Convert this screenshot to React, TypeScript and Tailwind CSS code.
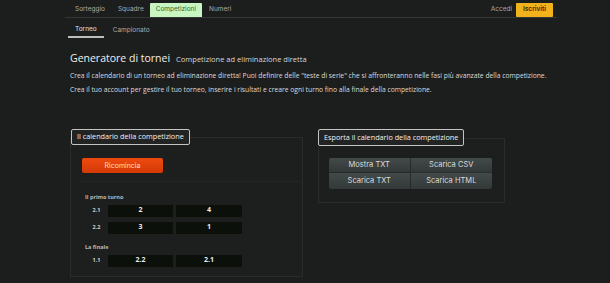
export default function App() {
  const nav = "font-['Inter',sans-serif]";
  const body = "font-['Open_Sans',sans-serif]";
  const cell = "h-[12px] flex items-center justify-center bg-[#0c100b] text-[7px] font-bold text-[#ececec]";
  const lbl = "w-[23px] text-center text-[5.5px] font-bold text-[#cfcfcf]";
  return (
    <div className={`w-[610px] h-[283px] bg-[#1c1d1d] overflow-hidden ${body}`}>
      <div className="ml-[65px] w-[492px]">
        {/* top nav */}
        <nav className={`flex items-end h-[18px] pt-[3px] border-b border-[#343535] ${nav}`}>
          <div className="flex h-[14px] items-stretch ml-[3px] text-[6.5px] text-[#a9abab]">
            <span className="flex items-center px-[7px]">Sorteggio</span>
            <span className="flex items-center px-[6px]">Squadre</span>
            <span className="flex items-center px-[6px] bg-[#c8f5c2] text-[#2f6b2c] rounded-t-[1px]">Competizioni</span>
            <span className="flex items-center px-[7px]">Numeri</span>
          </div>
          <div className="ml-auto flex h-[14px] items-stretch mr-[4px] text-[6.5px]">
            <span className="flex items-center px-[3px] mr-[1px] text-[#a9abab]">Accedi</span>
            <span className="flex items-center px-[7px] bg-[#f2b21b] text-[#3b2a05] font-semibold rounded-[1px]">Iscriviti</span>
          </div>
        </nav>
        {/* sub nav */}
        <div className={`flex pt-[5px] ml-[3px] text-[6.5px] ${nav}`}>
          <span className="flex items-center h-[15px] px-[7px] border-b-2 border-[#bdbdbd] text-[#e2e2e2]">Torneo</span>
          <span className="flex items-center h-[15px] px-[9px] text-[#a9abab]">Campionato</span>
        </div>
        {/* header */}
        <div className="ml-[5px] mt-[12px] flex items-baseline gap-[6px]">
          <h1 className="text-[10.5px] leading-[16px] text-[#f0f0f0] font-medium">Generatore di tornei</h1>
          <span className="text-[7.5px] text-[#d8d8d8] font-medium">Competizione ad eliminazione diretta</span>
        </div>
        <p className="ml-[5px] mt-[4px] text-[6.75px] leading-[12px] text-[#dcdcdc]">
          Crea il calendario di un torneo ad eliminazione diretta! Puoi definire delle "teste di serie" che si affronteranno nelle fasi più avanzate della competizione.
        </p>
        <p className="ml-[5px] mt-[1.5px] text-[6.75px] leading-[12px] text-[#dcdcdc]">
          Crea il tuo account per gestire il tuo torneo, inserire i risultati e creare ogni turno fino alla finale della competizione.
        </p>

        {/* panels */}
        <div className="flex gap-[15px] ml-[5px] mt-[33px]">
          {/* left */}
          <div className="flex flex-col w-[233px]">
            <div className="relative z-10 self-start ml-[1px] h-[16px] px-[5px] flex items-center bg-[#222323] border-[1.5px] border-[#c4c4c4] rounded-[2px] text-[7.25px] text-[#f2f2f2] font-medium">
              Il calendario della competizione
            </div>
            <div className="-mt-[8px] h-[140px] flex flex-col border border-[#2a2b2b] bg-[#1d1e1e] pl-[11px] pt-[20px]">
              <button className={`block w-[81px] h-[15px] rounded-[2px] bg-gradient-to-b from-[#ee4a10] to-[#d33a06] text-[7px] leading-[15px] text-[#ffdccb] ${nav}`}>
                Ricomincia
              </button>
              <div className="mt-[8px] -ml-[2px] mr-[1px] border-t border-[#242525] pt-[11px] pl-[5px]">
                <div className="text-[5.5px] font-bold text-[#b9b9b9] leading-[8px]">Il primo turno</div>
                <div className="mt-[4px] flex flex-col gap-[5px]">
                  {[["2.1", "2", "4"], ["2.2", "3", "1"]].map(([l, a, b]) => (
                    <div key={l} className="flex items-center">
                      <span className={lbl}>{l}</span>
                      <span className={`w-[65px] ${cell}`}>{a}</span>
                      <span className={`w-[66px] ml-[3px] ${cell}`}>{b}</span>
                    </div>
                  ))}
                </div>
                <div className="mt-[9px] text-[5.5px] font-bold text-[#b9b9b9] leading-[8px]">La finale</div>
                <div className="mt-[4px] flex items-center">
                  <span className={lbl}>1.1</span>
                  <span className={`w-[65px] ${cell}`}>2.2</span>
                  <span className={`w-[66px] ml-[3px] ${cell}`}>2.1</span>
                </div>
              </div>
            </div>
          </div>
          {/* right */}
          <div className="flex flex-col w-[187px]">
            <div className="relative z-10 self-start h-[17px] px-[5px] flex items-center bg-[#222323] border-[1.5px] border-[#c4c4c4] rounded-[2px] text-[7.25px] text-[#f2f2f2] font-medium">
              Esporta il calendario della competizione
            </div>
            <div className="-mt-[8px] h-[65px] border border-[#2a2b2b] bg-[#1d1e1e] pl-[10px] pt-[19px]">
              <div className={`grid grid-cols-2 w-[163px] rounded-[2px] overflow-hidden text-[7.5px] text-[#dcdcdc] ${nav}`}>
                {["Mostra TXT", "Scarica CSV", "Scarica TXT", "Scarica HTML"].map((t, i) => (
                  <div
                    key={t}
                    className={`h-[15.5px] flex items-center justify-center bg-gradient-to-b from-[#434b4a] to-[#323938] ${i % 2 === 0 ? "border-r border-[#262b2a]" : ""} ${i < 2 ? "border-b border-[#2a302f]" : ""}`}
                  >
                    {t}
                  </div>
                ))}
              </div>
            </div>
          </div>
        </div>
      </div>
    </div>
  );
}
